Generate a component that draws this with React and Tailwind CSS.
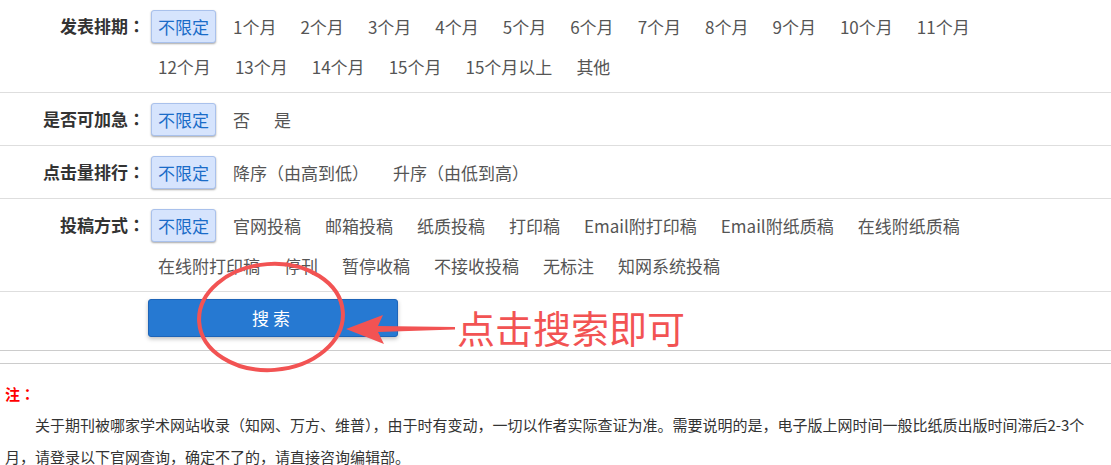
import React from "react";

const rows = [
  {
    label: "发表排期",
    options: ["不限定", "1个月", "2个月", "3个月", "4个月", "5个月", "6个月", "7个月", "8个月", "9个月", "10个月", "11个月", "12个月", "13个月", "14个月", "15个月", "15个月以上", "其他"],
  },
  { label: "是否可加急", options: ["不限定", "否", "是"] },
  { label: "点击量排行", options: ["不限定", "降序（由高到低）", "升序（由低到高）"] },
  {
    label: "投稿方式",
    options: ["不限定", "官网投稿", "邮箱投稿", "纸质投稿", "打印稿", "Email附打印稿", "Email附纸质稿", "在线附纸质稿", "在线附打印稿", "停刊", "暂停收稿", "不接收投稿", "无标注", "知网系统投稿"],
  },
];

function FilterRow({ label, options }) {
  return (
    <div className="flex border-b border-[#dedede] py-[6px]">
      <div className="w-[145px] shrink-0 text-right h-10 leading-10 font-bold text-[#333]">
        {label}
        <span className="font-['Noto_Sans_CJK_TC',sans-serif]">：</span>
      </div>
      <div className="ml-[6px] w-[860px] flex flex-wrap">
        {options.map((opt, i) => (
          <div key={i} className="h-10 flex items-center mr-[10px]">
            {i === 0 ? (
              <span className="px-[6px] h-[33px] leading-[31px] border border-[#a9c1ec] bg-[#d6e4fd] text-[#1a6cc8] rounded-[3px] shadow-[0_1px_2px_rgba(0,0,0,0.35)]">
                {opt}
              </span>
            ) : (
              <span className="px-[7px] h-[33px] leading-[33px] text-[#555] cursor-pointer">
                {opt}
              </span>
            )}
          </div>
        ))}
      </div>
    </div>
  );
}

export default function App() {
  return (
    <div className="relative w-[1111px] h-[465px] overflow-hidden bg-white font-['Noto_Sans_CJK_SC',sans-serif] text-[17px]">
      {/* FILTERS */}
      {rows.map((r, i) => (
        <FilterRow key={i} label={r.label} options={r.options} />
      ))}

      {/* SEARCH */}
      <div className="border-b border-[#cccccc] pt-[7px] pb-[13px] pl-[148px]">
        <button className="w-[250px] h-[38px] rounded-[3px] bg-[#2679d2] border border-[#1d64b8] text-white tracking-[4px] shadow-[0_2px_4px_rgba(0,0,0,0.25)]">
          搜索
        </button>
      </div>

      {/* NOTE */}
      <div className="mt-[12px] border-t border-[#cccccc] px-[5px] pt-[18px] text-[15px]">
        <div className="text-[#ff0000] font-bold leading-[24px]">
          注<span className="font-['Noto_Sans_CJK_TC',sans-serif]">：</span>
        </div>
        <p className="text-[#333] leading-[32px] mt-[3px] indent-[30px]">
          关于期刊被哪家学术网站收录（知网、万方、维普），由于时有变动，一切以作者实际查证为准。需要说明的是，电子版上网时间一般比纸质出版时间滞后2-3个月，请登录以下官网查询，确定不了的，请直接咨询编辑部。
        </p>
      </div>

      {/* ANNOTATION */}
      <svg className="absolute left-0 top-0 pointer-events-none" width="1111" height="465">
        <ellipse cx="271" cy="317" rx="72" ry="53" fill="none" stroke="#f25353" strokeWidth="4" transform="rotate(-4 271 317)" />
        <polygon points="346,329 383,315 378,326 455,327 455,329.5 378,332 384,344" fill="#f25353" />
      </svg>
      <div className="absolute left-[457px] top-[306px] text-[38px] leading-[42px] text-[#f25353]">
        点击搜索即可
      </div>
    </div>
  );
}
